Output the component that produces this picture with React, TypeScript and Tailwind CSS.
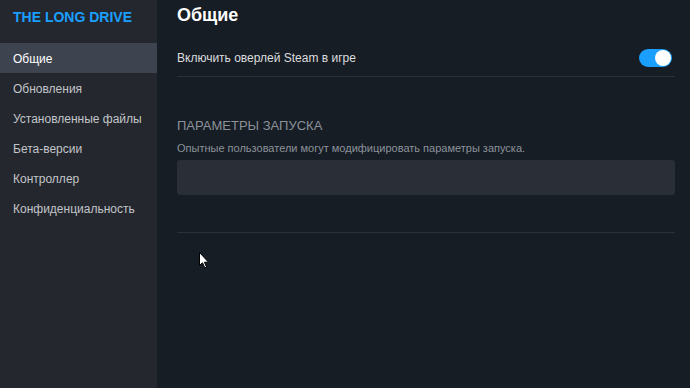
import React, { useState } from "react";

const items = [
  "Общие",
  "Обновления",
  "Установленные файлы",
  "Бета-версии",
  "Контроллер",
  "Конфиденциальность",
];

export default function App() {
  const [overlay, setOverlay] = useState(true);
  const [active, setActive] = useState(0);

  return (
    <div className="relative flex w-[690px] h-[388px] overflow-hidden bg-[#171d25] font-['Liberation_Sans',Arial,sans-serif]">
      {/* sidebar */}
      <aside className="w-[157px] shrink-0 bg-[#24272e] flex flex-col">
        <div className="pl-[13px] pt-[7px] h-[43px] text-[14px] font-bold text-[#1a9fff]">
          THE LONG DRIVE
        </div>
        <nav className="flex flex-col">
          {items.map((label, i) => (
            <button
              key={label}
              onClick={() => setActive(i)}
              className={`h-[30px] pl-[13px] text-left text-[12px] pt-[1px] ${
                active === i
                  ? "bg-[#3d4450] text-[#ffffff]"
                  : "text-[#c2c5c9] hover:bg-[#30343c]"
              }`}
            >
              {label}
            </button>
          ))}
        </nav>
      </aside>

      {/* main */}
      <main className="flex-1 pl-[20px] pr-[15px]">
        <h1 className="pt-[3px] text-[18px] font-bold text-white leading-[24px]">Общие</h1>

        <div className="mt-[17px] flex items-center justify-between h-[33px] border-b border-[#2a313b]">
          <span className="text-[12px] text-[#dcdedf] -mt-[5px]">Включить оверлей Steam в игре</span>
          <button
            onClick={() => setOverlay((v) => !v)}
            className={`-mt-[5px] mr-[3px] w-[33px] h-[18px] rounded-full flex items-center px-[1px] ${
              overlay ? "bg-[#1a9fff] justify-end" : "bg-[#4b525c] justify-start"
            }`}
          >
            <span className="w-[16px] h-[16px] rounded-full bg-white" />
          </button>
        </div>

        <div className="mt-[41px] text-[13px] text-[#8b929a] uppercase leading-[16px]">
          Параметры запуска
        </div>
        <div className="mt-[7px] text-[11px] text-[#8b929a] leading-[14px]">
          Опытные пользователи могут модифицировать параметры запуска.
        </div>
        <input
          type="text"
          className="mt-[5px] block w-full h-[35px] rounded-[3px] bg-[#2a2e36] px-2 text-[12px] text-white outline-none"
        />

        <div className="mt-[37px] border-b border-[#2a313b]" />
      </main>

      {/* mouse cursor */}
      <svg
        className="absolute left-[199px] top-[252px]"
        width="11"
        height="17"
        viewBox="0 0 11 17"
      >
        <path d="M0.5 0.5 L0.5 13.5 L3.5 10.8 L5.8 15.8 L7.6 15 L5.4 10.2 L9.5 10.2 Z" fill="#ffffff" stroke="#000000" strokeWidth="1" />
      </svg>
    </div>
  );
}
